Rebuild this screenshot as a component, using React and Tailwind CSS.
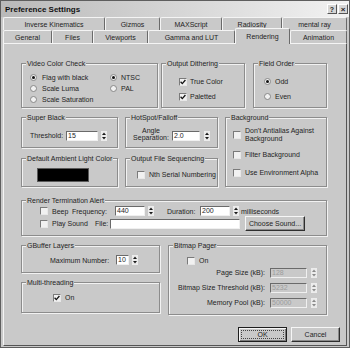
import React from 'react';

const BG = 'bg-[#c9c9c9]';

function Group({ label, className = '', children }) {
  return (
    <div className={`relative border border-[#8c8c8c] shadow-[inset_1px_1px_0_#f2f2f2,1px_1px_0_#f2f2f2] ${className}`}>
      <span className={`absolute -top-[5px] left-[4px] ${BG} px-[1px] leading-[9px] whitespace-nowrap`}>{label}</span>
      {children}
    </div>
  );
}

function Check({ on }) {
  return (
    <span className="inline-flex w-[8px] h-[8px] shrink-0 items-center justify-center bg-[#f1f1f1] border border-t-[#7a7a7a] border-l-[#7a7a7a] border-r-[#e8e8e8] border-b-[#e8e8e8]">
      {on && (
        <svg width="6" height="6" viewBox="0 0 6 6">
          <path d="M0.6 2.8 L2.3 4.6 L5.4 1" fill="none" stroke="#111" strokeWidth="1.3" />
        </svg>
      )}
    </span>
  );
}

function Radio({ on }) {
  return (
    <span className="inline-flex w-[7px] h-[7px] shrink-0 rounded-full items-center justify-center bg-[#f1f1f1] border border-[#888]">
      {on && <span className="w-[3px] h-[3px] rounded-full bg-[#111]" />}
    </span>
  );
}

function Field({ value, w, disabled }) {
  return (
    <span
      className={`${w} h-[10px] shrink-0 flex items-center pl-[1px] leading-[8px] border border-t-[#6a6a6a] border-l-[#6a6a6a] border-r-[#f0f0f0] border-b-[#f0f0f0] ${
        disabled ? 'bg-[#c9c9c9] text-[#9c9c9c]' : 'bg-white'
      }`}
    >
      {value}
    </span>
  );
}

function Arrows({ disabled, className = 'ml-[3px]' }) {
  const c = disabled ? '#8a8a8a' : '#1a1a1a';
  return (
    <svg width="6" height="10" viewBox="0 0 6 10" className={`shrink-0 ${className}`}>
      <rect x="0" y="0" width="6" height="10" fill="#ececec" />
      <path d="M3 1.5 L5 4 L1 4 Z" fill={c} />
      <path d="M3 8.5 L5 6 L1 6 Z" fill={c} />
    </svg>
  );
}

function Tab({ label, className = '' }) {
  return (
    <div className={`flex items-center justify-center whitespace-nowrap border-t border-l border-r border-t-[#f4f4f4] border-l-[#f4f4f4] border-r-[#6a6a6a] rounded-t-[2px] ${className}`}>
      {label}
    </div>
  );
}

function Button({ label, className = '', def }) {
  if (def) {
    return (
      <div className={`flex p-[2px] border border-[#1e1e1e] shadow-[inset_1px_1px_0_#f6f6f6,inset_-1px_-1px_0_#7a7a7a] ${className}`}>
        <span className="flex-1 flex items-center justify-center leading-[7px] border border-dotted border-[#444]">{label}</span>
      </div>
    );
  }
  return (
    <div className={`flex items-center justify-center whitespace-nowrap border border-t-[#f6f6f6] border-l-[#f6f6f6] border-r-[#2e2e2e] border-b-[#2e2e2e] shadow-[inset_-1px_-1px_0_#8a8a8a] ${className}`}>
      {label}
    </div>
  );
}

export default function App() {
  return (
    <div className={`w-[350px] h-[348px] ${BG} border border-[#5e5e5e] overflow-hidden flex flex-col font-['Liberation_Sans',Arial,sans-serif] text-[7px] leading-[9px] text-[#1e1e1e]`}>
      {/* title bar */}
      <div className="h-[16px] shrink-0 flex items-center justify-between pl-[4px] pr-[1px] bg-linear-to-r from-[#b9b9b9] to-[#f2f2f2]">
        <span className="text-[8px] font-bold text-[#111]">Preference Settings</span>
        <div className="flex gap-[1px]">
          <span className="w-[10px] h-[10px] flex items-center justify-center text-[7px] font-bold bg-[#d6d6d6] border border-t-white border-l-white border-r-[#555] border-b-[#555]">?</span>
          <span className="w-[10px] h-[10px] flex items-center justify-center text-[8px] font-bold bg-[#d6d6d6] border border-t-white border-l-white border-r-[#555] border-b-[#555]">×</span>
        </div>
      </div>

      <div className="px-[2px] flex flex-col">
        {/* tab rows */}
        <div className="flex h-[13px]">
          <Tab label="Inverse Kinematics" className="w-[102px]" />
          <Tab label="Gizmos" className="w-[55px]" />
          <Tab label="MAXScript" className="w-[62px]" />
          <Tab label="Radiosity" className="w-[60px]" />
          <Tab label="mental ray" className="flex-1" />
        </div>
        <div className="flex h-[13px] items-end">
          <Tab label="General" className="w-[49px] h-[13px]" />
          <Tab label="Files" className="w-[41px] h-[13px]" />
          <Tab label="Viewports" className="w-[55px] h-[13px]" />
          <Tab label="Gamma and LUT" className="w-[87px] h-[13px]" />
          <Tab label="Rendering" className={`w-[55px] h-[16px] -mb-[1px] relative z-10 ${BG}`} />
          <Tab label="Animation" className="flex-1 h-[13px]" />
        </div>

        {/* panel */}
        <div className="h-[303px] flex flex-col pl-[17px] pt-[19px] border border-t-[#f4f4f4] border-l-[#f4f4f4] border-r-[#555] border-b-[#555]">
          {/* row A */}
          <div className="flex h-[45px] shrink-0">
            <Group label="Video Color Check" className="w-[137px] pt-[8px] pl-[8px] flex">
              <div className="w-[80px] flex flex-col">
                <div className="flex items-center h-[11px]"><Radio on /><span className="ml-[5px]">Flag with black</span></div>
                <div className="flex items-center h-[11px]"><Radio /><span className="ml-[5px]">Scale Luma</span></div>
                <div className="flex items-center h-[11px]"><Radio /><span className="ml-[5px]">Scale Saturation</span></div>
              </div>
              <div className="flex flex-col">
                <div className="flex items-center h-[11px]"><Radio on /><span className="ml-[4px]">NTSC</span></div>
                <div className="flex items-center h-[11px]"><Radio /><span className="ml-[4px]">PAL</span></div>
              </div>
            </Group>
            <Group label="Output Dithering" className="ml-[3px] w-[84px] pt-[10px] pl-[17px]">
              <div className="flex items-center h-[15px]"><Check on /><span className="ml-[3px]">True Color</span></div>
              <div className="flex items-center h-[15px]"><Check on /><span className="ml-[3px]">Paletted</span></div>
            </Group>
            <Group label="Field Order" className="ml-[8px] w-[74px] pt-[10px] pl-[10px]">
              <div className="flex items-center h-[15px]"><Radio on /><span className="ml-[4px]">Odd</span></div>
              <div className="flex items-center h-[15px]"><Radio /><span className="ml-[4px]">Even</span></div>
            </Group>
          </div>

          {/* rows B / C */}
          <div className="flex mt-[9px] h-[70px] shrink-0">
            <div className="grid grid-cols-[97px_93px] grid-rows-[31px_29px] gap-x-[7px] gap-y-[10px]">
              <Group label="Super Black" className="pl-[8px] pt-[12px]">
                <div className="flex items-center h-[11px]">
                  <span className="w-[36px]">Threshold:</span>
                  <Field value="15" w="w-[32px]" />
                  <Arrows />
                </div>
              </Group>
              <Group label="HotSpot/Falloff" className="pl-[4px] pt-[9px]">
                <div className="flex items-end">
                  <span className="w-[42px] text-center leading-[7px]">Angle<br />Separation:</span>
                  <Field value="2.0" w="w-[28px]" />
                  <Arrows className="ml-[4px]" />
                </div>
              </Group>
              <Group label="Default Ambient Light Color" className="pl-[15px] pt-[9px]">
                <div className="w-[52px] h-[14px] bg-black border border-[#5a5a5a]" />
              </Group>
              <Group label="Output File Sequencing" className="pl-[11px] pt-[11px]">
                <div className="flex items-center h-[9px]"><Check /><span className="ml-[4px] whitespace-nowrap">Nth Serial Numbering</span></div>
              </Group>
            </div>
            <Group label="Background" className="ml-[7px] w-[102px] pl-[7px] pt-[9px]">
              <div className="flex items-center">
                <Check />
                <span className="ml-[4px] leading-[8px] whitespace-nowrap">Don't Antialias Against<br />Background</span>
              </div>
              <div className="flex items-center h-[9px] mt-[7px]"><Check /><span className="ml-[4px]">Filter Background</span></div>
              <div className="flex items-center h-[9px] mt-[9px]"><Check /><span className="ml-[4px] whitespace-nowrap">Use Environment Alpha</span></div>
            </Group>
          </div>

          {/* render termination alert */}
          <Group label="Render Termination Alert" className="mt-[13px] w-[306px] h-[36px] shrink-0 pl-[18px] pt-[5px]">
            <div className="flex items-center h-[10px]">
              <Check />
              <span className="ml-[4px] w-[20px]">Beep</span>
              <span className="w-[43px]">Frequency:</span>
              <Field value="440" w="w-[30px]" />
              <Arrows />
              <span className="ml-[13px] w-[33px]">Duration:</span>
              <Field value="200" w="w-[30px]" />
              <Arrows />
              <span className="ml-[2px]">milliseconds</span>
            </div>
            <div className="flex items-center h-[15px]">
              <Check />
              <span className="ml-[4px] w-[43px]">Play Sound</span>
              <span className="w-[15px]">File:</span>
              <Field value="" w="w-[130px]" />
              <Button label="Choose Sound..." className="ml-[5px] w-[60px] h-[15px]" />
            </div>
          </Group>

          {/* row D */}
          <div className="flex mt-[9px] shrink-0">
            <div className="w-[139px] flex flex-col">
              <Group label="GBuffer Layers" className="h-[28px] pl-[28px] pt-[9px]">
                <div className="flex items-center h-[10px]">
                  <span className="w-[66px] whitespace-nowrap">Maximum Number:</span>
                  <Field value="10" w="w-[13px]" />
                  <Arrows />
                </div>
              </Group>
              <Group label="Multi-threading" className="mt-[9px] h-[31px] pl-[31px] pt-[10px]">
                <div className="flex items-center h-[9px]"><Check on /><span className="ml-[4px]">On</span></div>
              </Group>
            </div>
            <Group label="Bitmap Pager" className="ml-[8px] w-[159px] h-[70px] pl-[18px] pt-[10px]">
              <div className="flex items-center h-[9px]"><Check /><span className="ml-[4px]">On</span></div>
              {[
                ['Page Size (kB):', '128'],
                ['Bitmap Size Threshold (kB):', '5232'],
                ['Memory Pool (kB):', '50000'],
              ].map(([label, value]) => (
                <div key={label} className="flex items-center justify-end h-[15px] pr-[9px]">
                  <span className="whitespace-nowrap">{label}</span>
                  <span className="ml-[5px] flex"><Field value={value} w="w-[37px]" disabled /></span>
                  <Arrows disabled className="ml-[4px]" />
                </div>
              ))}
            </Group>
          </div>

          {/* buttons */}
          <div className="flex justify-end gap-[4px] pr-[6px] mt-[12px]">
            <Button label="OK" def className="w-[49px] h-[15px]" />
            <Button label="Cancel" className="w-[49px] h-[15px]" />
          </div>
        </div>
      </div>
    </div>
  );
}
